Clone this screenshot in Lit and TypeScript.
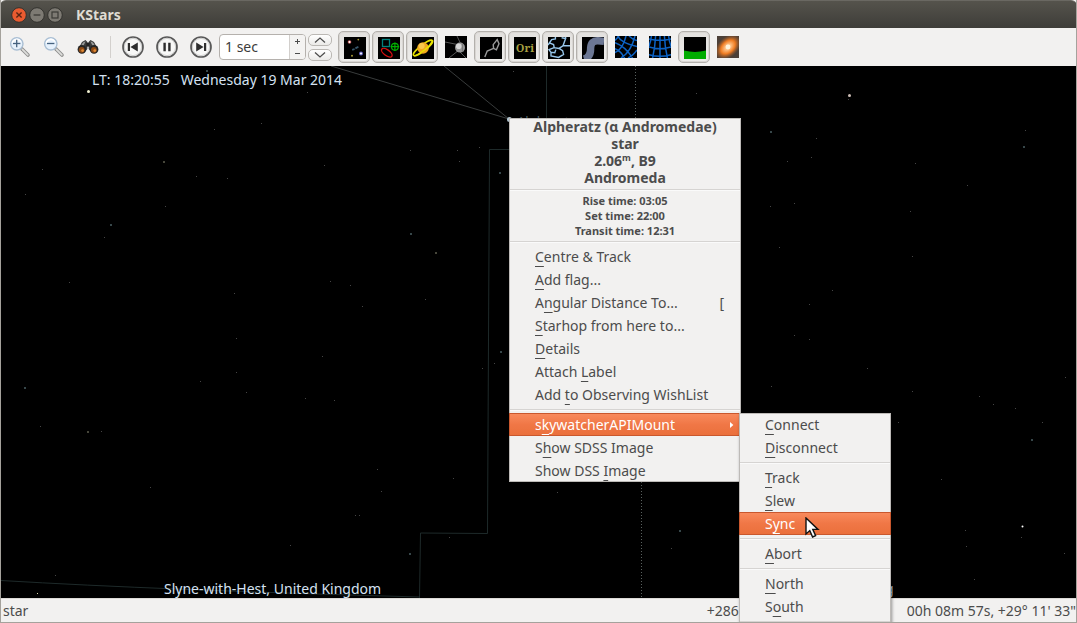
import { LitElement, html, css, svg, nothing } from "lit";
import { customElement, property } from "lit/decorators.js";
import { classMap } from "lit/directives/class-map.js";

type Entry = { label: string; key: number; shortcut?: string; submenu?: boolean; active?: boolean } | null;

/* x, y, size, colour */
type Star = [number, number, number, string?];

const STARS: Star[] = [
  [206, 4, 2], [307, 26, 1], [261, 57, 1], [214, 63, 1], [410, 84, 1], [457, 84, 1],
  [479, 81, 1], [459, 95, 1], [163, 95, 2, "#46463a"], [324, 99, 1], [42, 103, 1], [196, 110, 1], [227, 112, 1],
  [499, 106, 2], [25, 128, 1], [165, 140, 1], [110, 158, 2], [104, 171, 1], [410, 167, 2], [435, 186, 2, "#46463a"],
  [69, 216, 1], [330, 215, 1], [350, 219, 1], [234, 227, 1], [425, 233, 1], [362, 240, 1], [236, 272, 1],
  [322, 290, 1], [500, 285, 2], [494, 297, 1], [482, 302, 1], [236, 306, 1], [200, 315, 1], [24, 321, 2],
  [246, 326, 1], [305, 332, 1], [334, 334, 1], [40, 360, 1], [87, 365, 2, "#46463a"], [101, 365, 1], [377, 403, 1],
  [453, 412, 1], [150, 421, 1], [381, 425, 1], [355, 449, 1], [359, 449, 1], [449, 471, 1], [290, 479, 1],
  [409, 487, 2], [55, 509, 1], [37, 527, 1, "#d8d8a8"], [848, 33, 1], [770, 65, 2], [816, 72, 1],
  [811, 91, 1], [787, 95, 1], [915, 97, 1], [1025, 64, 1], [1023, 80, 2], [967, 119, 1], [794, 137, 1],
  [770, 140, 1], [910, 145, 1], [779, 181, 1], [912, 190, 1], [832, 224, 1], [809, 238, 1], [794, 269, 1],
  [809, 273, 1], [867, 302, 1], [771, 320, 1], [1065, 311, 1], [912, 325, 1], [979, 330, 1], [993, 338, 1],
  [1015, 342, 1], [1042, 356, 1], [898, 356, 1], [1031, 373, 2], [941, 413, 1], [965, 464, 1], [1021, 471, 1],
  [966, 480, 1], [1064, 487, 1], [974, 513, 1], [557, 426, 1], [513, 5, 1], [696, 27, 1], [679, 464, 2], [671, 482, 1],
];

const BRIGHT: Star[] = [[88, 25, 3, "#f0f0d0"], [849, 29, 3, "#cfc0b8"], [1022, 460, 1, "#ffffff"], [509, 53, 5, "#b8ccd8"]];

const OBJECT_MENU: Entry[] = [
  { label: "Centre & Track", key: 0 },
  { label: "Add flag...", key: 0 },
  { label: "Angular Distance To...", key: 1, shortcut: "[" },
  { label: "Starhop from here to...", key: 0 },
  { label: "Details", key: 0 },
  { label: "Attach Label", key: 7 },
  { label: "Add to Observing WishList", key: 4 },
  null,
  { label: "skywatcherAPIMount", key: 1, submenu: true, active: true },
  { label: "Show SDSS Image", key: 1 },
  { label: "Show DSS Image", key: 9 },
];

const MOUNT_MENU: Entry[] = [
  { label: "Connect", key: 0 },
  { label: "Disconnect", key: 0 },
  null,
  { label: "Track", key: 0 },
  { label: "Slew", key: 0 },
  { label: "Sync", key: 1, active: true },
  null,
  { label: "Abort", key: 0 },
  null,
  { label: "North", key: 0 },
  { label: "South", key: 1 },
  null,
];

const magnifier = (plus: boolean) => svg`
  <path d="M13 13 L19 19" stroke="#8e8e8c" stroke-width="3.6" stroke-linecap="round"/>
  <path d="M13.4 13.4 L18.8 18.8" stroke="#dededc" stroke-width="1.8" stroke-linecap="round"/>
  <circle cx="7.8" cy="7.8" r="6.2" fill="#e6f1fc" stroke="#a9bed3" stroke-width="1.4"/>
  <path d="M3.4 7 A4.6 4.6 0 0 1 11.8 5.6" fill="none" stroke="#fff" stroke-width="1.6"/>
  <path d="M4 7.5 H11.4" stroke="#45627f" stroke-width="1.3"/>
  ${plus ? svg`<path d="M7.7 3.8 V11.2" stroke="#45627f" stroke-width="1.3"/>` : nothing}`;

const roundButton = (glyph: unknown) => svg`
  <circle cx="11" cy="11" r="10" fill="#f8f8f7" stroke="#585858" stroke-width="1.7"/>
  <circle cx="11" cy="11" r="8.6" fill="none" stroke="#c9c9c8" stroke-width="0.9"/>${glyph}`;

const sky = svg`<rect width="22" height="22" fill="#000"/>`;

const ICONS: Record<string, unknown> = {
  zoomIn: magnifier(true),
  zoomOut: magnifier(false),
  find: svg`
    <path d="M5 6 L8.5 4 L10.4 6 V13 L8.6 15 L1 13.4 Z" fill="#3a3b3b"/>
    <path d="M17 6 L13.5 4 L11.6 6 V13 L13.4 15 L21 13.4 Z" fill="#3a3b3b"/>
    <path d="M6 6.4 L8.6 5.2 L6.4 10 L3.4 10.6 Z M16 6.4 L13.4 5.2 L15.6 10 L18.6 10.6 Z" fill="#9a9c9b"/>
    <rect x="9.4" y="6.6" width="3.2" height="4" fill="#222"/>
    <circle cx="4.9" cy="13.4" r="4.3" fill="#252525"/><circle cx="17.1" cy="13.4" r="4.3" fill="#252525"/>
    <circle cx="4.7" cy="13.8" r="2.9" fill="#8d4a14"/><circle cx="16.9" cy="13.8" r="2.9" fill="#8d4a14"/>
    <circle cx="5.6" cy="14.6" r="1.4" fill="#e08a35"/><circle cx="17.8" cy="14.6" r="1.4" fill="#e08a35"/>`,
  previous: roundButton(svg`<path d="M5.8 7 H8 V15 H5.8 Z M15.8 6.6 V15.4 L8.4 11 Z" fill="#2e2e2e"/>`),
  pause: roundButton(svg`<path d="M7.4 6.8 H9.8 V15.2 H7.4 Z M12.2 6.8 H14.6 V15.2 H12.2 Z" fill="#2e2e2e"/>`),
  next: roundButton(svg`<path d="M14 7 H16.2 V15 H14 Z M6.2 6.6 V15.4 L13.6 11 Z" fill="#2e2e2e"/>`),
  stars: svg`${sky}
    <circle cx="5.5" cy="5" r="1.8" fill="#c8605e"/><circle cx="5.5" cy="5" r="0.9" fill="#fff"/>
    <circle cx="17" cy="16.5" r="2" fill="#6060c0"/><circle cx="17" cy="16.5" r="1" fill="#fff"/>
    <circle cx="14.3" cy="2.6" r="0.9" fill="#a99a38"/><circle cx="8" cy="18.8" r="1" fill="#a99a38"/>
    <path d="M8.2 12.8 L10.6 12 M11.4 11.4 L14.4 9.8" stroke="#38586c" stroke-width="1.8"/>`,
  deepSky: svg`${sky}
    <rect x="4.5" y="2.5" width="7" height="7" fill="none" stroke="#00807c" stroke-width="1.3"/>
    <ellipse cx="8.8" cy="15.7" rx="6.2" ry="2.9" transform="rotate(36 8.8 15.7)" fill="none" stroke="#d81010" stroke-width="1.4"/>
    <circle cx="16.9" cy="9.7" r="3.4" fill="none" stroke="#00b000" stroke-width="1.2"/>
    <path d="M12.6 9.7 H21.2 M16.9 5.4 V14" stroke="#00b000" stroke-width="1.2"/>`,
  planets: svg`${sky}
    <ellipse cx="11" cy="11" rx="12" ry="3" transform="rotate(-38 11 11)" fill="none" stroke="#e8e400" stroke-width="1.5"/>
    <circle cx="11" cy="11" r="5.8" fill="#f2a91e"/><circle cx="9.6" cy="9" r="3" fill="#f9c74c"/>
    <path d="M1.9 18.8 Q4.5 18.6 12.6 13 Q19 8 20.6 3.2" fill="none" stroke="#e8e400" stroke-width="1.5"/>`,
  satellites: svg`${sky}
    <path d="M0 6 L15 9 M4 22 L14 14 M12 0 L15.8 8 M15 16 L21 22" stroke="#606060" stroke-width="0.9"/>
    <circle cx="15" cy="11.6" r="5" fill="#969696"/><circle cx="13.8" cy="10.2" r="2.8" fill="#d6d6d6"/>
    <path d="M17.4 7.6 V16" stroke="#777" stroke-width="1"/>`,
  lines: svg`${sky}<path d="M4.8 20 L7.2 14 L13.6 11.4 L13.2 7.6 L17.2 2.6 L19 6.8 L16.4 12.8 L13.6 11.4" fill="none" stroke="#9a9a9a" stroke-width="1.4"/>`,
  names: svg`${sky}<text x="11" y="15" text-anchor="middle" class="ori">Ori</text>`,
  boundaries: svg`${sky}
    <path d="M7.4 0 V2 L3.6 2.6 L1.4 6 L5.6 7.6 L6.2 10.6 L11 11.4 L15 8.8 L17.6 1.6 L13.6 0.8 M17.6 1.6 V0 M15 8.8 H22 M11 11.4 L14.6 13.6 L15.6 17.4 L10.6 20.4 L3 19 V15.4 L6.8 15.8 L7.8 12.6 M1.4 6 L0 8 M6.2 10.6 L1 12.6 L3 15.4" fill="none" stroke="#98c6ea" stroke-width="1.4"/>`,
  milkyWay: svg`${sky}<path d="M2 22 Q9 20 8.6 11 Q9 3.4 16 3.8 Q20 4.2 22 4.4" fill="none" stroke="#6c7794" stroke-width="7.4"/>`,
  equatorial: svg`${sky}<path d="M2.6 0 Q6 7 22 10.6 M0 6.6 Q10 10 17.6 22 M0 16.6 Q8 13 11 0 M6 22 Q16 16 20 0 M0 12.6 Q6 15 9.6 22 M13 22 Q18 20 22 14 M0 4.4 L4 0 M14 0 Q18 4 22 4.6" fill="none" stroke="#0c62c4" stroke-width="1.5"/>`,
  horizontal: svg`${sky}<path d="M0 3 Q11 5.6 22 3 M0 11 Q11 14.6 22 11 M0 18.6 Q11 22 22 18.6 M11 0 V22 M6.6 0 Q6 12 3.6 22 M15.4 0 Q16 12 18.4 22 M2.4 0 Q2 5 0 10 M19.6 0 Q20 5 22 10" fill="none" stroke="#0c62c4" stroke-width="1.5"/>`,
  ground: svg`${sky}<path d="M0 13.6 Q11 16.4 22 13.6 V22 H0 Z" fill="#00ac00"/>`,
  galaxy: svg`
    <defs><radialGradient id="core"><stop offset="0" stop-color="#fff8e0"/><stop offset="0.2" stop-color="#ffc48a"/>
    <stop offset="0.55" stop-color="#f07c22"/><stop offset="1" stop-color="#a85a24" stop-opacity="0"/></radialGradient></defs>
    <rect width="22" height="22" fill="#4c4038"/>
    <ellipse cx="11" cy="11" rx="15" ry="10" transform="rotate(-42 11 11)" fill="url(#core)"/>
    <circle cx="11" cy="11" r="2.4" fill="#fff4dc"/>`,
};

const icon = (name: string) => html`<svg class="icon" width="22" height="22" viewBox="0 0 22 22" aria-hidden="true">${ICONS[name]}</svg>`;

@customElement("popup-menu")
export class PopupMenu extends LitElement {
  @property({ attribute: false }) entries: Entry[] = [];

  static styles = css`
    :host {
      display: flow-root;
      box-sizing: border-box;
      background: #f2f1f0;
      box-shadow: inset 0 0 0 1px #bdbab7, 1px 1px 3px rgba(0, 0, 0, 0.4);
      font-size: 14px;
      color: #4c4c4c;
    }
    .item {
      display: flex;
      align-items: center;
      width: 100%;
      height: 23px;
      padding: 0 17px 0 26px;
      border: 0;
      background: none;
      color: inherit;
      font: inherit;
      line-height: 23px;
      text-align: left;
      white-space: pre;
    }
    .label { flex: 1; }
    .active {
      color: #fff;
      background: linear-gradient(#f98c5f, #f07746 50%, #ea6f3b);
      box-shadow: inset 0 0 0 1px #c9582e;
    }
    .item.submenu { padding-right: 7px; }
    u {
      text-decoration-thickness: 1px;
      text-underline-offset: 4px;
      text-decoration-skip-ink: none;
    }
    .rule {
      height: 1px;
      margin: 3px 1px;
      border: 0;
      background: #d6d4d2;
      box-shadow: 0 1px #fafafa;
    }
    .arrow { fill: #fff; }
  `;

  private item(e: Entry) {
    if (!e) return html`<hr class="rule" />`;
    const { label, key } = e;
    return html`<button role="menuitem" class=${classMap({ item: true, active: !!e.active, submenu: !!e.submenu })}
      ><span class="label">${label.slice(0, key)}<u>${label[key]}</u>${label.slice(key + 1)}</span
      >${e.shortcut ? html`<span>${e.shortcut}</span>` : nothing}${e.submenu
        ? html`<svg class="arrow" width="5" height="8" viewBox="0 0 5 8"><path d="M1 1 L4.4 4 L1 7 Z" /></svg>`
        : nothing}</button>`;
  }

  render() {
    return html`<slot></slot>${this.entries.map((e) => this.item(e))}`;
  }
}

@customElement("app-root")
export class AppRoot extends LitElement {
  static styles = css`
    :host {
      display: flex;
      flex-direction: column;
      position: relative;
      height: 100vh;
      overflow: hidden;
      box-sizing: border-box;
      border: 1px solid #a5a29c;
      border-top: 0;
      background: #f2f1f0;
      color: #4c4c4c;
      font: 14px/20px "Noto Sans", "Open Sans", sans-serif;
    }
    .titlebar {
      display: flex;
      align-items: center;
      gap: 2px;
      height: 28px;
      flex: none;
      box-sizing: border-box;
      margin: 0 -1px;
      padding: 0 11px;
      border-top: 1px solid #6a6862;
      border-radius: 6px 6px 0 0;
      background: linear-gradient(#55534c, #3e3d39);
      color: #dfdbd2;
    }
    .title { margin: 0 0 0 11px; font-size: 14px; line-height: 20px; font-weight: 700; }
    .window-button { display: block; width: 16px; height: 16px; padding: 0; border: 0; background: none; }
    .toolbar {
      display: flex;
      align-items: center;
      height: 38px;
      flex: none;
      padding-left: 2px;
    }
    .tool {
      display: flex;
      align-items: center;
      justify-content: center;
      flex: none;
      width: 32px;
      height: 32px;
      box-sizing: border-box;
      margin: 0 1px;
      padding: 0;
      border: 0;
      background: none;
    }
    .pressed {
      padding: 1px 0 0 1px;
      border: 1px solid #b3b0ac;
      border-radius: 5px;
      background: linear-gradient(#e2e0de, #eeedeb);
      box-shadow: inset 0 0 0 1px #d9d6d3;
    }
    .icon { display: block; flex: none; }
    .ori { font: bold 11px "Noto Serif", "DejaVu Serif", serif; fill: #a8a042; }
    .divider { width: 1px; height: 22px; margin: 0 5px; background: #d3d0cd; }
    .spin {
      display: flex;
      width: 87px;
      height: 26px;
      box-sizing: border-box;
      margin: 0 2px 0 1px;
      border: 1px solid #b5b1ad;
      border-radius: 4px;
      background: #fff;
      overflow: hidden;
    }
    .spin-field {
      flex: 1;
      min-width: 0;
      padding: 0 5px;
      border: 0;
      background: none;
      color: #3c3c3c;
      font: inherit;
      outline: 0;
    }
    .steps { display: flex; flex-direction: column; width: 15px; border-left: 1px solid #d2cfcc; background: #f4f3f2; }
    .step { display: flex; align-items: center; justify-content: center; flex: 1; padding: 0; border: 0; background: none; }
    .stroke { fill: none; stroke: #4c4c4c; }
    .shift { display: flex; flex-direction: column; gap: 3px; margin-right: 5px; }
    .shift-button {
      display: flex;
      align-items: center;
      justify-content: center;
      width: 24px;
      height: 12px;
      padding: 0;
      border: 1px solid #bbb8b4;
      border-radius: 5px;
      background: linear-gradient(#fff, #ebeae8);
    }
    .sky {
      display: flex;
      flex-direction: column;
      justify-content: space-between;
      align-items: flex-start;
      position: relative;
      flex: 1;
      min-height: 0;
      background: #000;
      color: #d5e2f2;
      overflow: hidden;
    }
    .chart { position: absolute; inset: 0; width: 100%; height: 100%; }
    .star-label { font-size: 13px; fill: #52646e; }
    .info { position: relative; margin: 0; line-height: 18px; white-space: pre; }
    .time { padding: 5px 0 0 91px; }
    .place { padding-left: 163px; }
    .focus { fill: #b9cde0; font-size: 14px; }
    .status { display: flex; align-items: center; height: 23px; flex: none; padding: 0 0 0 2px; border-top: 1px solid #dcdad7; }
    .status-message { flex: 1; }
    .horizontal { width: 200px; flex: none; }
    .menu { position: absolute; z-index: 1; }
    .object-menu { left: 508px; top: 118px; width: 232px; }
    .mount-menu { left: 738px; top: 413px; width: 152px; z-index: 2; }
    .heading { margin: 0; text-align: center; font-size: 14px; line-height: 17px; font-weight: 700; }
    .sup { font-size: 9px; line-height: 0; vertical-align: 5px; }
    .times { margin: 0; text-align: center; font-size: 11px; line-height: 15px; font-weight: 700; }
    .rule { height: 1px; margin: 3px 1px; border: 0; background: #d6d4d2; box-shadow: 0 1px #fafafa; }
    .cursor { position: absolute; left: 803px; top: 517px; z-index: 3; }
  `;

  private tool(name: string, label: string, pressed = false) {
    return html`<button class=${classMap({ tool: true, pressed })} aria-label=${label} title=${label}>${icon(name)}</button>`;
  }

  private windowButton(label: string, fill: string, glyph: unknown) {
    return html`<button class="window-button" aria-label=${label}>
      <svg class="icon" width="16" height="16" viewBox="0 0 16 16">
        <circle cx="8" cy="8" r="7.3" fill=${fill} stroke="#33322e" stroke-width="1" />${glyph}
      </svg>
    </button>`;
  }

  private chart() {
    return html`<svg class="chart" aria-hidden="true">
      <g fill="none" stroke="#383b3b">
        <path d="M330 0 L508 53 M443 0 L508 53" />
      </g>
      <g fill="none" stroke="#1e2a2a">
        <path d="M508 83.5 H488.5 L486.5 467.5 L419.5 467 L418.5 532 M545.5 0 V53" />
        <path d="M0 514.5 Q160 524 419 531" />
      </g>
      <path d="M634.5 0 V53 M640.5 416 V532" stroke="#59615f" stroke-dasharray="1 2" />
      ${STARS.map(([x, y, s, c]) => svg`<rect x=${x - 1} y=${y} width=${s} height=${s} fill=${c ?? (s > 1 ? "#37474a" : "#454545")}/>`)}
      ${BRIGHT.map(([x, y, s, c]) => svg`<circle cx=${x - 0.5} cy=${y + 0.5} r=${Math.max(s / 2, 1)} fill=${c}/>`)}
      <text class="star-label" x="516" y="60">Alpheratz</text>
      <text class="focus" x="884" y="528">g</text>
    </svg>`;
  }

  render() {
    return html`
      <header class="titlebar">
        ${this.windowButton("Close", "#ea5b30", svg`<path d="M5.4 5.4 L10.6 10.6 M10.6 5.4 L5.4 10.6" stroke="#5a2413" stroke-width="1.4"/>`)}
        ${this.windowButton("Minimise", "#7d7a73", svg`<path d="M4.6 8 H11.4" stroke="#3b3a36" stroke-width="1.3"/>`)}
        ${this.windowButton("Maximise", "#7d7a73", svg`<rect x="5" y="5" width="6" height="6" fill="none" stroke="#3b3a36" stroke-width="1.2"/>`)}
        <h1 class="title">KStars</h1>
      </header>
      <nav class="toolbar" aria-label="Main toolbar">
        ${this.tool("zoomIn", "Zoom in")}${this.tool("zoomOut", "Zoom out")}${this.tool("find", "Find object")}
        <span class="divider"></span>
        ${this.tool("previous", "Step backward")}${this.tool("pause", "Pause clock")}${this.tool("next", "Step forward")}
        <div class="spin">
          <input class="spin-field" type="text" aria-label="Time step" .value=${"1 sec"} />
          <span class="steps">
            <button class="step" aria-label="Increase step">
              <svg class="stroke" width="5" height="5" viewBox="0 0 5 5"><path d="M0 2.5 H5 M2.5 0 V5" /></svg>
            </button>
            <button class="step" aria-label="Decrease step">
              <svg class="stroke" width="5" height="5" viewBox="0 0 5 5"><path d="M0 2.5 H5" /></svg>
            </button>
          </span>
        </div>
        <div class="shift">
          <button class="shift-button" aria-label="Larger unit">
            <svg class="stroke" width="12" height="6" viewBox="0 0 12 6"><path d="M1 5.4 L6 1 L11 5.4" stroke-width="1.3" /></svg>
          </button>
          <button class="shift-button" aria-label="Smaller unit">
            <svg class="stroke" width="12" height="6" viewBox="0 0 12 6"><path d="M1 0.6 L6 5 L11 0.6" stroke-width="1.3" /></svg>
          </button>
        </div>
        ${this.tool("stars", "Stars", true)}${this.tool("deepSky", "Deep sky", true)}${this.tool("planets", "Solar system", true)}
        ${this.tool("satellites", "Satellites")}${this.tool("lines", "Constellation lines", true)}
        ${this.tool("names", "Constellation names", true)}${this.tool("boundaries", "Constellation boundaries", true)}
        ${this.tool("milkyWay", "Milky Way", true)}${this.tool("equatorial", "Equatorial grid")}
        ${this.tool("horizontal", "Horizontal grid")}${this.tool("ground", "Ground", true)}${this.tool("galaxy", "What's interesting")}
      </nav>
      <main class="sky">
        ${this.chart()}
        <p class="info time">LT: 18:20:55   Wednesday 19 Mar 2014</p>
        <p class="info place">Slyne-with-Hest, United Kingdom</p>
      </main>
      <footer class="status">
        <span class="status-message">star</span>
        <span class="horizontal">+286</span>
        <span>00h 08m 57s, +29° 11' 33"</span>
      </footer>
      <popup-menu class="menu object-menu" role="menu" .entries=${OBJECT_MENU}>
        <p class="heading">Alpheratz (α Andromedae)<br />star<br />2.06<span class="sup">m</span>, B9<br />Andromeda</p>
        <hr class="rule" />
        <p class="times">Rise time: 03:05<br />Set time: 22:00<br />Transit time: 12:31</p>
        <hr class="rule" />
      </popup-menu>
      <popup-menu class="menu mount-menu" role="menu" .entries=${MOUNT_MENU}></popup-menu>
      <svg class="cursor" width="16" height="22" viewBox="0 0 16 22" aria-hidden="true">
        <path d="M2 1 V17 L5.8 13.6 L8.6 20 L11.6 18.6 L8.8 12.4 H14 Z" fill="#fff" stroke="#111" stroke-width="1.4" />
      </svg>
    `;
  }
}
